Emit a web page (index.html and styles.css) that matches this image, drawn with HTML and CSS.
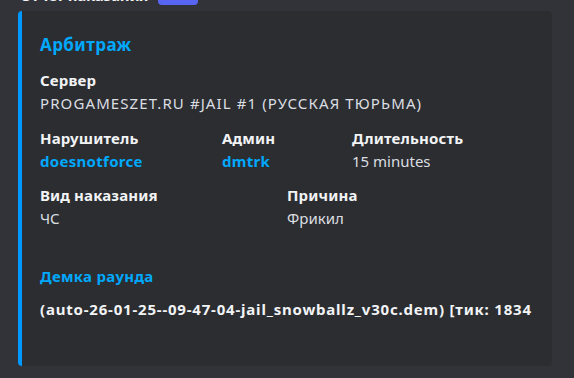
FILE: index.html
```html
<!DOCTYPE html>
<html lang="ru">
<head>
<meta charset="UTF-8" />
<meta name="viewport" content="width=device-width, initial-scale=1" />
<title>Отчёт наказания</title>
<link rel="stylesheet" href="styles.css">
</head>
<body>

<div class="message">
  <div class="msg-header">
    <span class="username">Отчёт наказания</span>
    <span class="bot-tag">APP</span>
    <span class="timestamp">26.01.2025 9:47</span>
  </div>

  <div class="embed">
    <div class="embed-title">Арбитраж</div>

    <div class="fields">
      <div class="field-row">
        <div class="field">
          <div class="field-name">Сервер</div>
          <div class="field-value caps">PROGAMESZET.RU #JAIL #1 (РУССКАЯ ТЮРЬМА)</div>
        </div>
      </div>

      <div class="field-row cols-3">
        <div class="field">
          <div class="field-name">Нарушитель</div>
          <div class="field-value link">doesnotforce</div>
        </div>
        <div class="field">
          <div class="field-name">Админ</div>
          <div class="field-value link">dmtrk</div>
        </div>
        <div class="field">
          <div class="field-name">Длительность</div>
          <div class="field-value">15 minutes</div>
        </div>
      </div>

      <div class="field-row cols-2">
        <div class="field">
          <div class="field-name">Вид наказания</div>
          <div class="field-value">ЧС</div>
        </div>
        <div class="field">
          <div class="field-name">Причина</div>
          <div class="field-value">Фрикил</div>
        </div>
      </div>

      <div class="field-row demo">
        <div class="field">
          <div class="field-name link">Демка раунда</div>
          <div class="field-value strong">(auto-26-01-25--09-47-04-jail_snowballz_v30c.dem) [тик: 1834</div>
        </div>
      </div>
    </div>
  </div>
</div>

</body>
</html>
```

FILE: styles.css
```css
html, body {
  margin: 0;
  height: 100%;
  overflow: hidden;
}
body {
  font-family: 'Noto Sans', 'Open Sans', sans-serif;
  background: #313338;
  color: #dbdee1;
}
.message {
  padding: 0 22px 0 18px;
}
.msg-header {
  display: flex;
  align-items: flex-end;
  height: 22px;
  margin-top: -14px;
  padding-left: 2px;
  gap: 10px;
}
.username {
  font-size: 15px;
  font-weight: 700;
  color: #f2f3f5;
  line-height: 22px;
  letter-spacing: -0.2px;
  margin-bottom: 2px;
}
.bot-tag {
  background: #5865f2;
  color: #fff;
  font-size: 10px;
  font-weight: 700;
  border-radius: 4px;
  padding: 2px 10px;
  line-height: 14px;
  margin-bottom: 3px;
}
.timestamp {
  font-size: 12px;
  color: #949ba4;
  line-height: 18px;
  margin-bottom: 4px;
}
.embed {
  margin-top: 3px;
  width: 534px;
  box-sizing: border-box;
  height: 355px;
  background: #2b2d31;
  border-left: 4px solid #0099ff;
  border-radius: 4px;
  padding: 21px 16px 0 18px;
}
.embed-title {
  font-size: 17px;
  font-weight: 700;
  color: #00a8fc;
  line-height: 26px;
  letter-spacing: 0.4px;
}
.fields {
  margin-top: 11px;
  display: flex;
  flex-direction: column;
  gap: 12px;
}
.field-row {
  display: grid;
  grid-template-columns: 1fr;
}
.field-row.cols-3 {
  grid-template-columns: 182px 130px 1fr;
}
.field-row.cols-2 {
  margin-top: -1px;
  grid-template-columns: 247px 1fr;
}
.field-row.demo {
  margin-top: 23px;
}
.field-name {
  font-size: 15px;
  font-weight: 700;
  color: #f2f3f5;
  line-height: 22px;
  letter-spacing: 0.15px;
}
.field-value {
  font-size: 15px;
  line-height: 24px;
  color: #dbdee1;
  white-space: nowrap;
}
.field-value.caps {
  letter-spacing: 1.1px;
}
.demo .field-value {
  margin-top: 10px;
}
.link {
  color: #00a8fc;
  font-weight: 700;
  letter-spacing: 0.3px;
}
.strong {
  font-weight: 700;
  color: #f2f3f5;
  letter-spacing: 0.8px;
}
```
